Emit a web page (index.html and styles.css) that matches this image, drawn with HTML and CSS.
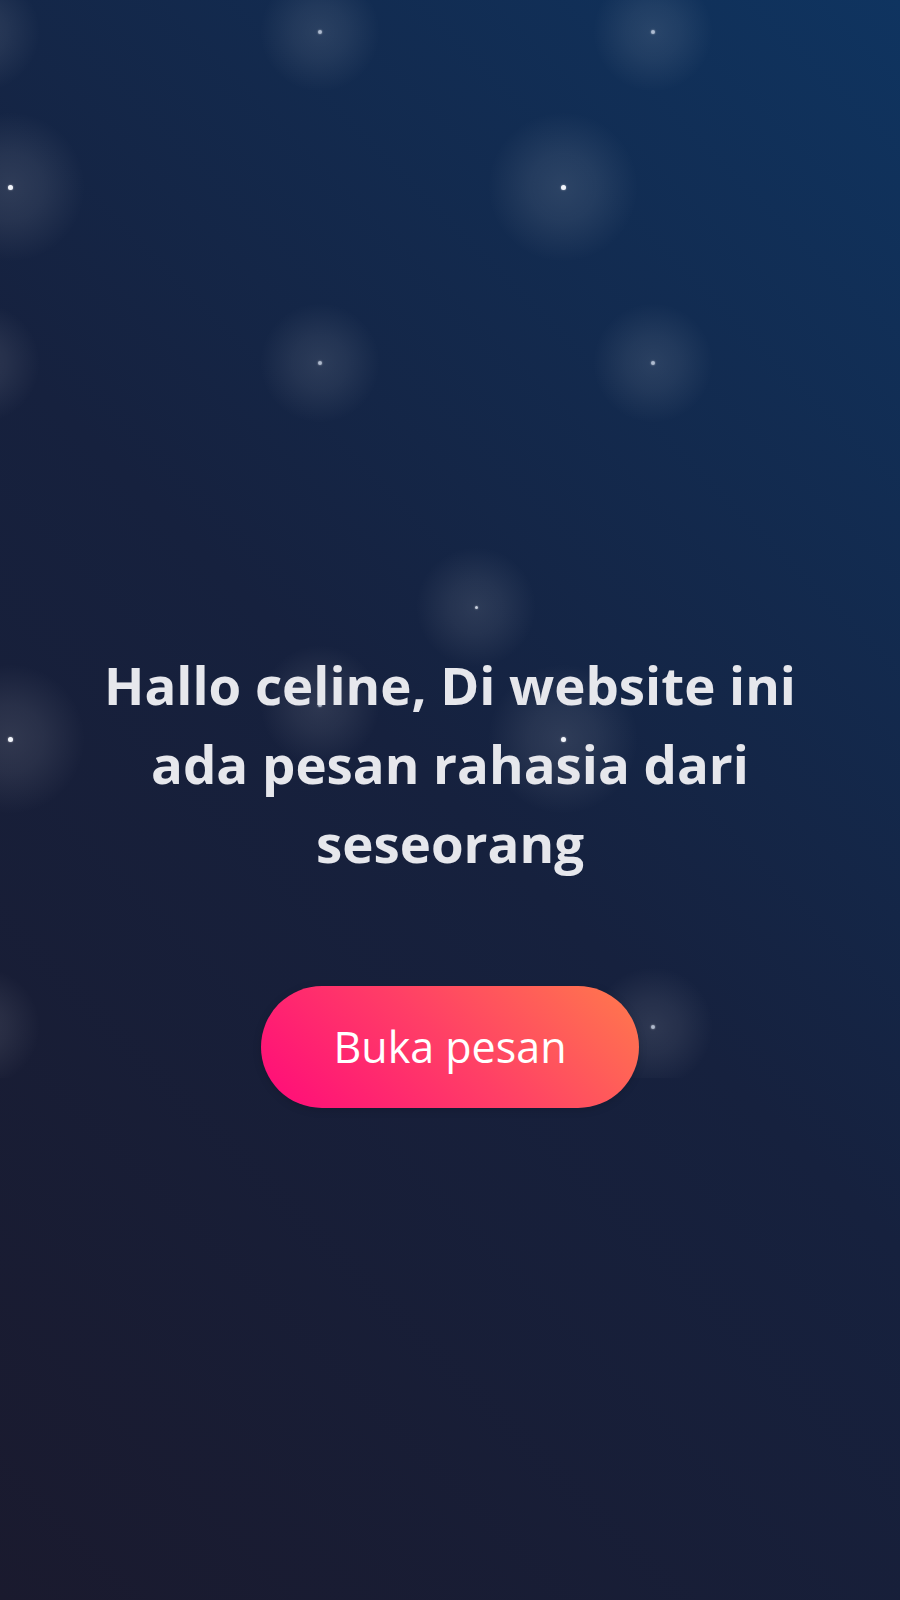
FILE: index.html
```html
<!DOCTYPE html>
<html lang="id">
<head>
<meta charset="utf-8">
<title>Pesan Rahasia</title>
<link rel="stylesheet" href="styles.css">
</head>
<body>
<div class="page">
  <div class="sky" aria-hidden="true">
    <span class="star s1"></span>
    <span class="star s2"></span>
    <span class="star s3"></span>
    <span class="star big s4"></span>
    <span class="star big s5"></span>
    <span class="star s6"></span>
    <span class="star s7"></span>
    <span class="star s8"></span>
    <span class="star small s9"></span>
    <span class="star big s10"></span>
    <span class="star big s11"></span>
    <span class="star s12"></span>
    <span class="star s13"></span>
    <span class="star s14"></span>
  </div>
  <main class="content">
    <h1 class="title">Hallo celine, Di website ini ada pesan rahasia dari seseorang</h1>
    <button class="open-btn" type="button">Buka pesan</button>
  </main>
</div>
</body>
</html>
```

FILE: styles.css
```css
html, body {
  margin: 0;
  padding: 0;
}

body {
  min-height: 1600px;
  background: linear-gradient(45deg, #1a1a2e 0%, #16213e 50%, #0f3460 100%);
  font-family: "Open Sans", "Noto Sans", sans-serif;
}

.page {
  position: relative;
  min-height: 1600px;
  overflow: hidden;
}

.sky {
  position: absolute;
  top: 0;
  left: 0;
  right: 0;
  height: 1078px;
  overflow: hidden;
  pointer-events: none;
}

.star {
  position: absolute;
  width: 120px;
  height: 120px;
  margin: -60px 0 0 -60px;
  border-radius: 50%;
  background: radial-gradient(circle closest-side, rgba(255,255,255,0.10) 0%, rgba(255,255,255,0.065) 45%, rgba(255,255,255,0) 100%);
}

.star::after {
  content: "";
  position: absolute;
  left: 50%;
  top: 50%;
  width: 4px;
  height: 4px;
  margin: -2px 0 0 -2px;
  border-radius: 50%;
  background: rgba(220, 230, 245, 0.75);
  box-shadow: 0 0 2px rgba(255,255,255,0.6);
}

.star.big {
  width: 150px;
  height: 150px;
  margin: -75px 0 0 -75px;
  background: radial-gradient(circle closest-side, rgba(255,255,255,0.11) 0%, rgba(255,255,255,0.075) 45%, rgba(255,255,255,0) 100%);
}

.star.big::after {
  width: 5px;
  height: 5px;
  margin: -2.5px 0 0 -2.5px;
  background: #f2f5fb;
}

.star.small::after {
  width: 3px;
  height: 3px;
  margin: -1.5px 0 0 -1.5px;
  background: rgba(230, 236, 248, 0.85);
}

.s1 { left: -20px; top: 32px; }
.s2 { left: 320px; top: 32px; }
.s3 { left: 653px; top: 32px; }
.s4 { left: 10px; top: 187px; }
.s5 { left: 563px; top: 187px; }
.s6 { left: -20px; top: 363px; }
.s7 { left: 320px; top: 363px; }
.s8 { left: 653px; top: 363px; }
.s9 { left: 476px; top: 607px; }
.s10 { left: 10px; top: 739px; }
.s11 { left: 563px; top: 739px; }
.s12 { left: 320px; top: 705px; }
.s13 { left: 653px; top: 1027px; }
.s14 { left: -20px; top: 1027px; }

.content {
  position: relative;
  display: flex;
  flex-direction: column;
  align-items: center;
  padding-top: 645px;
}

.title {
  margin: 0;
  max-width: 740px;
  font-size: 52.8px;
  line-height: 1.5;
  font-weight: 700;
  color: #e6e7ec;
  text-align: center;
}

.open-btn {
  margin-top: 103px;
  width: 378px;
  padding: 30px 0;
  border: none;
  border-radius: 61px;
  background: linear-gradient(45deg, #ff0a7a 0%, #ff3f66 50%, #ff7a4c 100%);
  color: #ffffff;
  font-family: "Open Sans", "Noto Sans", sans-serif;
  font-size: 43px;
  font-weight: 400;
  line-height: 62px;
  box-shadow: 0 2px 8px rgba(0, 0, 0, 0.15);
  cursor: pointer;
}
```
